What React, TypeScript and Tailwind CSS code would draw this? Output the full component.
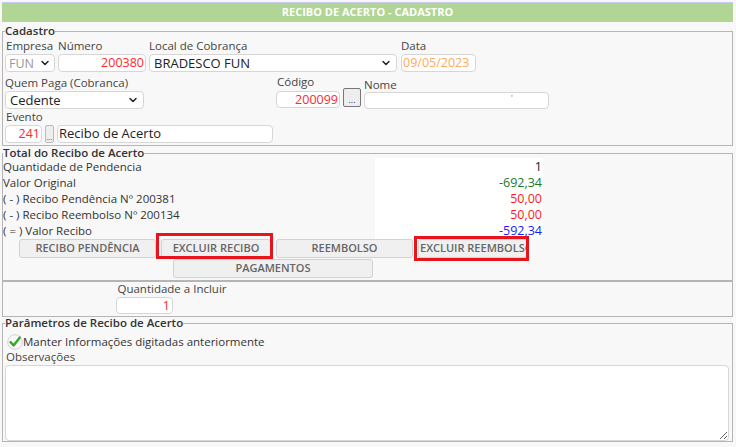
import { ChevronDown } from "lucide-react";

const font = { fontFamily: '"Open Sans", "Noto Sans", sans-serif' };

function Legend({ children }: { children: React.ReactNode }) {
  return (
    <legend className="px-0 text-[11.5px] leading-[12px] font-semibold text-[#333]">{children}</legend>
  );
}

function Label({ children, className = "" }: { children: React.ReactNode; className?: string }) {
  return <div className={`whitespace-nowrap text-[11.5px] leading-[14px] text-[#444] ${className}`}>{children}</div>;
}

const inputBox = "h-[17px] rounded-[4px] border border-[#d6d6d6] bg-white text-[12.5px] leading-[15px]";

function Btn({ children, className = "" }: { children: React.ReactNode; className?: string }) {
  return (
    <div
      className={`flex h-[19px] items-center justify-center overflow-hidden whitespace-nowrap rounded-[3px] border border-[#d2d2d2] bg-[#f0f0f0] text-[11px] font-semibold text-[#666] ${className}`}
    >
      {children}
    </div>
  );
}

export default function App() {
  const totals = [
    { label: "Quantidade de Pendencia", value: "1", color: "text-[#222]" },
    { label: "Valor Original", value: "-692,34", color: "text-[#1e7a1e]" },
    { label: "( - ) Recibo Pendência Nº 200381", value: "50,00", color: "text-[#ff1a1a]" },
    { label: "( - ) Recibo Reembolso Nº 200134", value: "50,00", color: "text-[#ff1a1a]" },
    { label: "( = ) Valor Recibo", value: "-592,34", color: "text-[#1a1aff]" },
  ];

  return (
    <div className="h-[447px] w-[736px] overflow-hidden bg-[#f8f8f8] pt-[2px] pl-[2px] pr-[3px]" style={font}>
      {/* Header */}
      <div className="flex h-[20px] items-center justify-center border-t border-[#c9c9f2] bg-[#b0d594] text-[11px] font-bold text-white">
        RECIBO DE ACERTO - CADASTRO
      </div>

      {/* Cadastro */}
      <fieldset className="mt-[3px] h-[121px] border border-[#b5b5b5] px-[2px] pb-0">
        <Legend>Cadastro</Legend>
        <div className="mt-[2px] flex items-start">
          <div className="mr-[3px] w-[50px]">
            <Label className="pl-[1px]">Empresa</Label>
            <div className={`${inputBox} mt-[1px] flex h-[18px] items-center justify-between px-[3px] text-[#999]`}>
              <span>FUN</span>
              <ChevronDown size={12} strokeWidth={3} className="text-[#222]" />
            </div>
          </div>
          <div className="mr-[3px] w-[88px]">
            <Label>Número</Label>
            <div className={`${inputBox} mt-[1px] h-[18px] px-[1px] text-right text-[#ff2a2a]`}>200380</div>
          </div>
          <div className="mr-[4px] w-[248px]">
            <Label>Local de Cobrança</Label>
            <div className={`${inputBox} mt-[1px] flex h-[18px] items-center justify-between px-[4px] text-[13px] text-[#222]`}>
              <span>BRADESCO FUN</span>
              <ChevronDown size={12} strokeWidth={3} className="text-[#222]" />
            </div>
          </div>
          <div className="w-[75px]">
            <Label>Data</Label>
            <div className={`${inputBox} mt-[1px] h-[18px] px-[1px] text-[#ffa95a]`}>09/05/2023</div>
          </div>
        </div>

        <div className="mt-[3px] flex items-start">
          <div className="mr-[132px] w-[139px]">
            <Label className="pt-[1px]">Quem Paga (Cobranca)</Label>
            <div className={`${inputBox} mt-[1px] flex h-[18px] items-center justify-between px-[4px] text-[13px] text-[#222]`}>
              <span>Cedente</span>
              <ChevronDown size={12} strokeWidth={3} className="text-[#222]" />
            </div>
          </div>
          <div className="mr-[3px] w-[64px]">
            <Label className="pl-[1px]">Código</Label>
            <div className={`${inputBox} mt-[2px] px-[1px] text-right text-[#ff2a2a]`}>200099</div>
          </div>
          <div className="mr-[3px] mt-[13px] flex h-[19px] w-[18px] items-end justify-center rounded-[2px] border border-[#777] bg-[#eee] pb-[2px] text-[9px] leading-[9px] text-[#333]">
            ...
          </div>
          <div className="w-[185px]">
            <Label className="pt-[3px]">Nome</Label>
            <div className={`${inputBox} relative`}>
              <span className="absolute left-[146px] top-[-1px] text-[8px] leading-[10px] text-[#555]">'</span>
            </div>
          </div>
        </div>

        <div className="mt-[1px]">
          <Label className="pl-[1px]">Evento</Label>
          <div className="mt-[1px] flex items-center">
            <div className={`${inputBox} h-[18px] w-[37px] px-[1px] text-right text-[#ff2a2a]`}>241</div>
            <div className="ml-[3px] mr-[3px] flex h-[18px] w-[9px] items-end justify-center rounded-[2px] border border-[#bbb] bg-[#eee] text-[7px] leading-[9px] text-[#333]">
              ...
            </div>
            <div className={`${inputBox} h-[18px] w-[216px] px-[1px] text-[13px] text-[#222]`}>Recibo de Acerto</div>
          </div>
        </div>
      </fieldset>

      {/* Total */}
      <fieldset className="mt-[1px] h-[134px] border border-[#b5b5b5] px-0 pb-0">
        <Legend>Total do Recibo de Acerto</Legend>
        <div className="flex">
          <div className="w-[372px] text-[11.5px] leading-[16px] text-[#333]">
            {totals.map((t) => (
              <div key={t.label}>{t.label}</div>
            ))}
          </div>
          <div className="mt-[-1px] w-[168px] bg-white pr-[1px] pt-[1px] text-right text-[12.5px] leading-[16px]">
            {totals.map((t, i) => (
              <div key={i} className={t.color}>
                {t.value}
              </div>
            ))}
          </div>
        </div>
        <div className="relative ml-[16px] flex gap-[5px]">
          <Btn className="w-[137px]">RECIBO PENDÊNCIA</Btn>
          <Btn className="w-[110px]">EXCLUIR RECIBO</Btn>
          <Btn className="w-[137px]">REEMBOLSO</Btn>
          <Btn className="w-[110px] justify-start pl-[1px]">EXCLUIR REEMBOLSO</Btn>
          {/* highlight marks */}
          <div className="pointer-events-none absolute left-[137px] top-[-6px] h-[26px] w-[117px] border-[3px] border-[#e8141c]" />
          <div className="pointer-events-none absolute left-[395px] top-[-3px] h-[25px] w-[115px] border-[3px] border-[#e8141c]" />
        </div>
        <div className="ml-[170px] mt-[1px]">
          <Btn className="w-[200px]">PAGAMENTOS</Btn>
        </div>
      </fieldset>

      {/* Quantidade */}
      <div className="h-[36px] border border-[#b5b5b5]">
        <div className="ml-[113px] w-[112px]">
          <Label className="text-center">Quantidade a Incluir</Label>
          <div className={`${inputBox} mt-[1px] w-[57px] pr-[2px] text-right text-[#ff2a2a]`}>1</div>
        </div>
      </div>

      {/* Parametros */}
      <fieldset className="h-[125px] border border-[#b5b5b5] px-[2px] pb-0">
        <Legend>Parâmetros de Recibo de Acerto</Legend>
        <div className="mt-[4px] flex items-center">
          <svg width="16" height="16" viewBox="0 0 16 16" className="ml-[2px]">
            <circle cx="8" cy="8" r="7.3" fill="#fafafa" stroke="#c8c8c8" strokeWidth="0.8" />
            <path d="M3.5 8.2 L6.6 11.4 L12.8 3.4" fill="none" stroke="#3aa52a" strokeWidth="2.4" strokeLinecap="round" strokeLinejoin="round" />
          </svg>
          <span className="text-[11.5px] text-[#333]">Manter Informações digitadas anteriormente</span>
        </div>
        <Label className="pl-[1px]">Observações</Label>
        <textarea className="mt-[1px] block h-[76px] w-[724px] resize rounded-[4px] border border-[#d6d6d6] bg-white" />
      </fieldset>
    </div>
  );
}
